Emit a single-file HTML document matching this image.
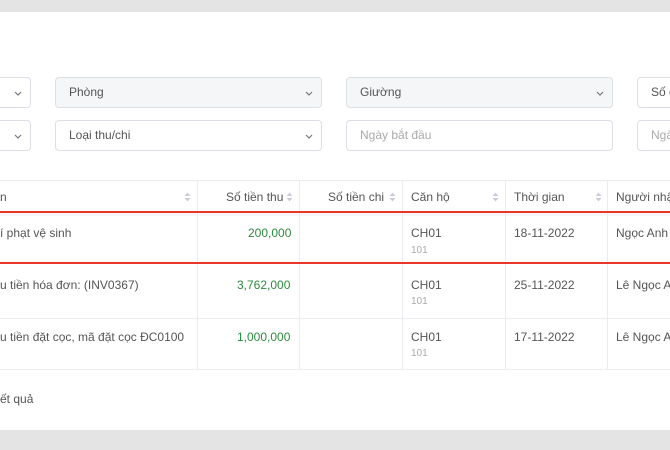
<!DOCTYPE html>
<html><head><meta charset="utf-8"><style>
*{box-sizing:border-box;margin:0;padding:0}
body{width:670px;height:450px;overflow:hidden;background:#e4e4e4;font-family:"Liberation Sans",Arial,sans-serif;font-size:12px;color:#555;position:relative}
.card{position:absolute;left:-20px;top:12px;width:720px;height:418px;background:#fff}
.in{position:absolute;height:31px;border:1px solid #dcdfe6;border-radius:4px;background:#fff;padding-left:13px;line-height:29px;color:#555}
.in.g{background:#f5f6f7}
.in.ph{color:#aaa}
.chev{position:absolute;right:7px;top:10px;width:10px;height:10px}
.hl{position:absolute;left:0;width:700px;height:1px;background:#ececf0}
.vl{position:absolute;width:1px;background:#ececf0}
.red{position:absolute;left:0;width:670px;height:1.5px;background:#e8362a}
.tx{position:absolute;white-space:nowrap}
.sort{position:absolute;width:7px;height:10px}
.gr{color:#2e8b3e}
.sm{color:#aaa;font-size:10px}
</style></head><body>
<div class="card"></div>
<svg width="0" height="0" style="position:absolute"><defs>
<symbol id="cv" viewBox="0 0 10 10"><path d="M2 4 L5 7 L8 4" stroke="#777" stroke-width="1.2" fill="none"/></symbol>
<symbol id="st" viewBox="0 0 7 10"><path d="M3.5 0.5 L6.5 4 H0.5Z M3.5 9.5 L6.5 6 H0.5Z" fill="#ccd"/></symbol>
</defs></svg>

<div class="in" style="left:-10px;top:77px;width:41px"><svg class="chev"><use href="#cv"/></svg></div>
<div class="in g" style="left:55px;top:77px;width:267px">Phòng<svg class="chev"><use href="#cv"/></svg></div>
<div class="in g" style="left:346px;top:77px;width:267px">Giường<svg class="chev"><use href="#cv"/></svg></div>
<div class="in" style="left:637px;top:77px;width:60px">Số c</div>
<div class="in" style="left:-10px;top:120px;width:41px"><svg class="chev"><use href="#cv"/></svg></div>
<div class="in" style="left:55px;top:120px;width:267px">Loại thu/chi<svg class="chev"><use href="#cv"/></svg></div>
<div class="in ph" style="left:346px;top:120px;width:267px">Ngày bắt đầu</div>
<div class="in ph" style="left:637px;top:120px;width:60px">Ngà</div>

<div class="hl" style="top:180px"></div>
<div class="hl" style="top:318px"></div>
<div class="hl" style="top:369px"></div>
<div style="position:absolute;left:0;top:213px;width:670px;height:3px;background:#f6f6f8"></div>
<div class="vl" style="left:197px;top:180px;height:190px"></div>
<div class="vl" style="left:299px;top:180px;height:190px"></div>
<div class="vl" style="left:402px;top:180px;height:190px"></div>
<div class="vl" style="left:505px;top:180px;height:190px"></div>
<div class="vl" style="left:607px;top:180px;height:190px"></div>
<div class="red" style="top:211px"></div>
<div class="red" style="top:262px"></div>

<div class="tx" style="left:0;top:190px">n</div>
<svg class="sort" style="left:184px;top:192px"><use href="#st"/></svg>
<div class="tx" style="left:226px;top:190px">Số tiền thu</div>
<svg class="sort" style="left:286px;top:192px"><use href="#st"/></svg>
<div class="tx" style="left:328px;top:190px">Số tiền chi</div>
<svg class="sort" style="left:389px;top:192px"><use href="#st"/></svg>
<div class="tx" style="left:411px;top:190px">Căn hộ</div>
<svg class="sort" style="left:492px;top:192px"><use href="#st"/></svg>
<div class="tx" style="left:514px;top:190px">Thời gian</div>
<svg class="sort" style="left:595px;top:192px"><use href="#st"/></svg>
<div class="tx" style="left:616px;top:190px">Người nhậ</div>

<div class="tx" style="left:0;top:226px">í phạt vệ sinh</div>
<div class="tx gr" style="left:248px;top:226px">200,000</div>
<div class="tx" style="left:411px;top:226px">CH01</div>
<div class="tx sm" style="left:411px;top:245px">101</div>
<div class="tx" style="left:514px;top:226px">18-11-2022</div>
<div class="tx" style="left:616px;top:226px">Ngọc Anh</div>

<div class="tx" style="left:0;top:278px">u tiền hóa đơn: (INV0367)</div>
<div class="tx gr" style="left:237px;top:278px">3,762,000</div>
<div class="tx" style="left:411px;top:278px">CH01</div>
<div class="tx sm" style="left:411px;top:296px">101</div>
<div class="tx" style="left:514px;top:278px">25-11-2022</div>
<div class="tx" style="left:616px;top:278px">Lê Ngọc A</div>

<div class="tx" style="left:0;top:330px">u tiền đặt cọc, mã đặt cọc ĐC0100</div>
<div class="tx gr" style="left:237px;top:330px">1,000,000</div>
<div class="tx" style="left:411px;top:330px">CH01</div>
<div class="tx sm" style="left:411px;top:348px">101</div>
<div class="tx" style="left:514px;top:330px">17-11-2022</div>
<div class="tx" style="left:616px;top:330px">Lê Ngọc A</div>

<div class="tx" style="left:0;top:392px">ết quả</div>
</body></html>
